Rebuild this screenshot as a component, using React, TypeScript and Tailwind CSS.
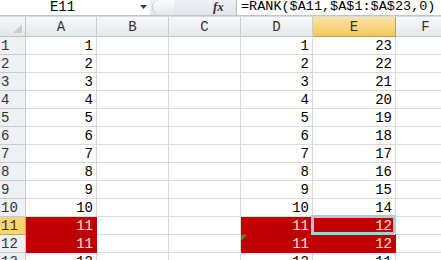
import React from "react";

const A = [1, 2, 3, 4, 5, 6, 7, 8, 9, 10, 11, 11, 12];
const E = [23, 22, 21, 20, 19, 18, 17, 16, 15, 14, 12, 12, 11];
const cols = ["A", "B", "C", "D", "E", "F"];

function Cell({
  v,
  red,
  children,
}: {
  v?: number | string;
  red?: boolean;
  children?: React.ReactNode;
}) {
  return (
    <div
      className={
        "relative h-[18px] border-r border-b text-right pr-[3px] leading-[18px] text-[14px] " +
        (red
          ? "bg-[#c00000] border-[#c00000] text-[#ffe2d6]"
          : "bg-white border-[#d9d9d9] text-black")
      }
    >
      {v}
      {children}
    </div>
  );
}

export default function App() {
  return (
    <div
      className="w-[441px] h-[260px] overflow-hidden bg-white"
      style={{ fontFamily: '"Liberation Mono", monospace' }}
    >
      {/* formula bar */}
      <div className="flex h-[15px] items-stretch bg-white">
        <div className="relative w-[150px] flex items-start justify-center">
          <span className="text-[14px] leading-[14px] text-black pr-[25px]">E11</span>
          <svg className="absolute left-[140px] top-[5px]" width="7" height="4" viewBox="0 0 7 4">
            <path d="M0 0 H7 L3.5 4 Z" fill="#404040" />
          </svg>
        </div>
        <div className="relative w-[86px] bg-gradient-to-b from-[#eef0f3] to-[#e2e5ea] flex items-center">
          <div className="ml-[2px] h-[15px] w-[22px] rounded-l-full bg-gradient-to-b from-[#fbfcfd] to-[#e4e7eb] border-l border-[#c9ccd1]" />
          <span
            className="absolute left-[63px] top-[0px] text-[13px] leading-[13px] italic font-bold text-[#333]"
            style={{ fontFamily: '"Liberation Serif", serif' }}
          >
            fx
          </span>
        </div>
        <div className="flex-1 border-l border-[#b8bcc2] pl-[4px] text-[13.5px] leading-[13px] text-black whitespace-nowrap">
          =RANK($A11,$A$1:$A$23,0)
        </div>
      </div>
      <div className="h-[2px] bg-[#d6dbe1] border-t border-[#bfc4ca]" />

      {/* grid */}
      <div className="grid grid-cols-[26px_71px_72px_72px_72px_83px_60px]">
        {/* header row */}
        <div className="h-[20px] border-r border-b border-[#c0c5cc] bg-gradient-to-b from-[#f5f6f8] to-[#e3e6ea] relative">
          <svg className="absolute right-[3px] bottom-[3px]" width="9" height="9" viewBox="0 0 9 9">
            <path d="M9 0 V9 H0 Z" fill="#c9ccd1" />
          </svg>
        </div>
        {cols.map((c) => (
          <div
            key={c}
            className={
              "h-[20px] border-r border-b text-center text-[14px] leading-[20px] text-[#333] " +
              (c === "E"
                ? "bg-gradient-to-b from-[#fbe3a4] to-[#f4c75d] border-[#c2a24f]"
                : "bg-gradient-to-b from-[#f7f8fa] to-[#e5e8ec] border-[#c6cbd1]")
            }
          >
            {c}
          </div>
        ))}

        {A.map((a, i) => {
          const r = i + 1;
          const red = r === 11 || r === 12;
          return (
            <React.Fragment key={r}>
              <div
                className={
                  "h-[18px] border-r border-b pl-[1px] text-[14px] leading-[18px] text-[#333] " +
                  (r === 11
                    ? "bg-[#f9d56e] border-[#c9a650]"
                    : "bg-[#eef0f3] border-[#c6cbd1]")
                }
              >
                {r}
              </div>
              <Cell v={a} red={red} />
              <Cell />
              <Cell />
              <Cell v={a} red={red}>
                {r === 12 && (
                  <svg className="absolute left-0 top-0" width="6" height="6" viewBox="0 0 6 6">
                    <path d="M0 0 H6 L0 6 Z" fill="#3f8f2f" />
                  </svg>
                )}
              </Cell>
              <Cell v={E[i]} red={red}>
                {r === 11 && (
                  <>
                    <div className="absolute left-[-2px] top-[-2px] right-[-1px] bottom-[-1px] border-[3px] border-[#a6cfd0] pointer-events-none" />
                    <div className="absolute right-[-4px] bottom-[-4px] w-[5px] h-[5px] bg-[#1f3f3f] border border-white" />
                  </>
                )}
              </Cell>
              <Cell />
            </React.Fragment>
          );
        })}
      </div>
    </div>
  );
}
